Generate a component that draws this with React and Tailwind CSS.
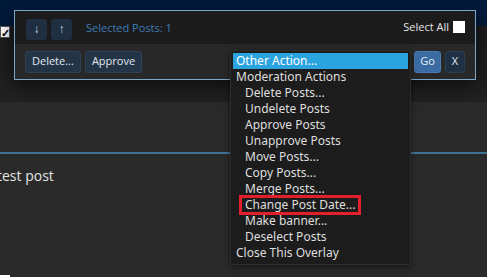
export default function App() {
  const items = [
    { label: 'Moderation Actions', indent: false },
    { label: 'Delete Posts...', indent: true },
    { label: 'Undelete Posts', indent: true },
    { label: 'Approve Posts', indent: true },
    { label: 'Unapprove Posts', indent: true },
    { label: 'Move Posts...', indent: true },
    { label: 'Copy Posts...', indent: true },
    { label: 'Merge Posts...', indent: true },
    { label: 'Change Post Date...', indent: true, marked: true },
    { label: 'Make banner...', indent: true },
    { label: 'Deselect Posts', indent: true },
    { label: 'Close This Overlay', indent: false },
  ]

  return (
    <div className="relative w-[487px] h-[277px] overflow-hidden bg-[#2a2a2a] font-['Open_Sans',sans-serif]">
      {/* Page behind the overlay */}
      <div className="h-[26px] bg-[#021a3b]" />
      <div className="h-[76px] bg-gradient-to-b from-[#1c1c1c] to-[#212121]">
        <div className="w-[10px] h-[12px] bg-white border border-[#555] flex items-center justify-center text-[11px] leading-none font-black text-black">✓</div>
      </div>
      <div className="h-[50px]" />
      <div className="h-[2px] bg-[#3f7396]" />
      <p className="mt-[13px] -ml-[3px] text-[14px] leading-[18px] text-[#e4e4e4]">test post</p>
      <div className="absolute left-0 bottom-0 w-[10px] h-[2px] bg-white" />

      {/* Moderation overlay */}
      <div className="absolute left-[14px] top-[10px] w-[462px] border border-[#7aa6c9] shadow-[0_6px_18px_rgba(0,0,0,0.6)]">
        <div className="h-[33px] bg-[#1b1b1b] flex items-center pl-[11px] pr-[10px]">
          <div className="flex gap-[4px] mt-[3px]">
            <button className="w-[21px] h-[21px] rounded-[3px] bg-[#1f2f41] text-[#c9d5e2] text-[12px] flex items-center justify-center">↓</button>
            <button className="w-[21px] h-[21px] rounded-[3px] bg-[#1f2f41] text-[#c9d5e2] text-[12px] flex items-center justify-center">↑</button>
          </div>
          <span className="ml-[14px] mt-[2px] text-[11px] text-[#3e7cb6]">Selected Posts: 1</span>
          <span className="ml-auto text-[11px] text-[#e6e6e6]">Select All</span>
          <span className="ml-[4px] -mt-[2px] w-[12px] h-[12px] bg-white" />
        </div>
        <div className="h-[35px] bg-[#282828] flex items-center pl-[10px] pr-[10px]">
          <button className="h-[22px] px-[6px] rounded-[3px] bg-[#233447] border border-[#2f4256] text-[11px] text-[#e2e8ee]">Delete...</button>
          <button className="ml-[4px] h-[22px] px-[6px] rounded-[3px] bg-[#233447] border border-[#2f4256] text-[11px] text-[#e2e8ee]">Approve</button>
          <button className="ml-auto h-[22px] w-[27px] rounded-[3px] bg-[#3a6ca3] border border-[#4a7cb3] text-[11px] text-[#e8eef5]">Go</button>
          <button className="ml-[4px] h-[22px] w-[20px] rounded-[3px] bg-[#1f3044] border border-[#2c3e52] text-[11px] text-[#e2e8ee]">X</button>
        </div>
      </div>

      {/* Open select list */}
      <div className="absolute left-[230px] top-[50px] w-[181px] bg-[#1c1c1c] border border-[#2c2c2c] p-[2px] pb-[3px] shadow-[0_2px_6px_rgba(0,0,0,0.5)] font-['Noto_Sans',sans-serif] text-[12px] leading-[16px] text-[#dedede]">
        <div className="bg-[#2aa3df] text-white px-[3px]">Other Action...</div>
        {items.map((it) => (
          <div key={it.label} className={it.indent ? 'pl-[12px]' : 'pl-[3px]'}>
            <span className={it.marked ? 'inline-block -ml-[4px] px-[4px] outline-[3px] outline-solid outline-[#e0202b] -outline-offset-1' : ''}>{it.label}</span>
          </div>
        ))}
      </div>
    </div>
  )
}
